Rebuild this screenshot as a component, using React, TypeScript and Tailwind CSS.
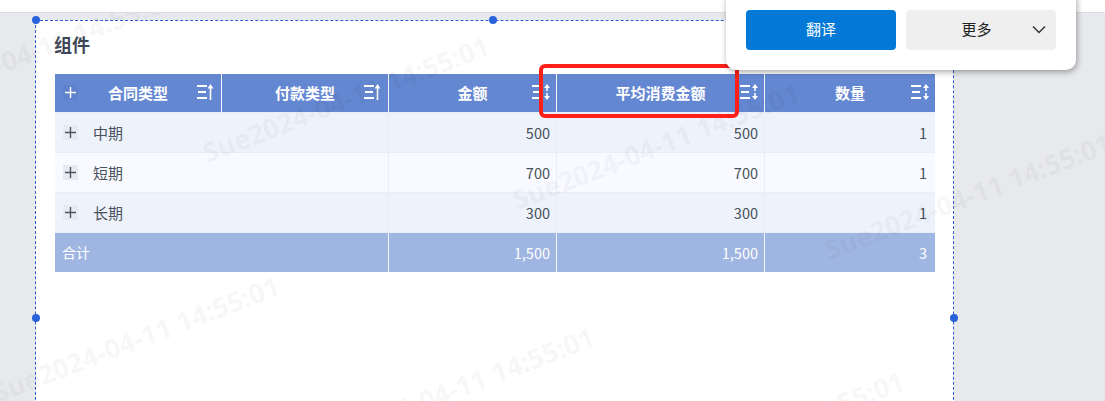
import React from "react";

const cjk = "font-['Microsoft_YaHei','Noto_Sans_CJK_SC','Noto_Sans',sans-serif]";

function SortIcon({ both }: { both?: boolean }) {
  return (
    <svg width={both ? 18 : 17} height="16" viewBox={both ? "0 0 18 16" : "0 0 17 16"} className="block" fill="none" stroke="#fff" strokeWidth="2">
      <path d="M0 2h10M1 8h8M0 14h10" />
      {both ? (
        <>
          <path d="M15 3v4" strokeWidth="1.6" />
          <path d="M12 4 15 0l3 4z" fill="#fff" stroke="none" />
          <path d="M15 9v4" strokeWidth="1.6" />
          <path d="M12 12l3 4 3-4z" fill="#fff" stroke="none" />
        </>
      ) : (
        <>
          <path d="M13.5 3v13" strokeWidth="1.6" />
          <path d="M10.5 4.5 13.5 0l3 4.5z" fill="#fff" stroke="none" />
        </>
      )}
    </svg>
  );
}

function Plus({ header }: { header?: boolean }) {
  return (
    <span className={`flex h-[15px] w-[15px] shrink-0 items-center justify-center ${header ? "bg-[#5f82cd]" : "bg-[#e6eaf1]"}`}>
      <svg width="11" height="11" viewBox="0 0 11 11" stroke={header ? "#fff" : "#4f5360"} strokeWidth="1.4">
        <path d="M0 5.5h11M5.5 0v11" />
      </svg>
    </span>
  );
}

const rows = [
  { name: "中期", amount: "500", bg: "bg-[#eef3fb]" },
  { name: "短期", amount: "700", bg: "bg-[#f8faff]" },
  { name: "长期", amount: "300", bg: "bg-[#eef3fb]" },
];

const gridCols = "grid grid-cols-[167px_167px_168px_208px_170px]";

function HeadCell({ label, both, plus, last }: { label: string; both?: boolean; plus?: boolean; last?: boolean }) {
  return (
    <div className={`relative flex h-[38px] items-center justify-center ${last ? "" : "border-r border-[#f3f5fb]"}`}>
      {plus && (
        <span className="absolute left-2 top-[11px]">
          <Plus header />
        </span>
      )}
      <span className="text-[15px] font-bold text-white">{label}</span>
      <span className={`absolute top-[10px] ${both ? "right-[6px]" : "right-[7px]"}`}>
        <SortIcon both={both} />
      </span>
    </div>
  );
}

function Num({ v, line = "border-[#e9edf6]", last, color = "text-[#474e5c]" }: { v: string; line?: string; last?: boolean; color?: string }) {
  return (
    <div className={`flex h-full items-center justify-end pt-px text-[14.5px] ${color} ${last ? "pr-[8px]" : `border-r pr-[6px] ${line}`}`}>{v}</div>
  );
}

const Handle = ({ cls }: { cls: string }) => (
  <span className={`absolute h-[8px] w-[8px] rounded-full bg-[#2a62dc] ${cls}`} />
);

const marks = [
  "left-[-115px] top-[78px]",
  "left-[198px] top-[126px]",
  "left-[508px] top-[173px]",
  "left-[820px] top-[223px]",
  "left-[-12px] top-[366px]",
  "left-[303px] top-[417px]",
  "left-[613px] top-[461px]",
];

export default function App() {
  return (
    <div className={`relative h-[401px] w-[1105px] overflow-hidden bg-[#e8e9ed] ${cjk}`}>
      <div className="h-[13px] border-b border-[#dcdde2] bg-white" />
      <div className="relative ml-[35px] mt-[7px] h-[400px] w-[919px] border border-dashed border-[#2a5bd0] bg-white pl-[18px] pt-[11px]">
        <h1 className="text-[18px] font-bold leading-[24px] text-[#3f4858]">组件</h1>
        <div className="ml-px mt-[18px] w-[880px]">
          <div className={`${gridCols} bg-[#6487d2]`}>
            <HeadCell label="合同类型" plus />
            <HeadCell label="付款类型" />
            <HeadCell label="金额" both />
            <HeadCell label="平均消费金额" both />
            <HeadCell label="数量" both last />
          </div>
          {rows.map((r) => (
            <div key={r.name} className={`${gridCols} h-[40px] items-stretch border-t border-[#e9edf6] ${r.bg}`}>
              <div className="flex items-center gap-[15px] pl-2 text-[15px] text-[#4a5260]">
                <Plus />
                <span className="pt-px">{r.name}</span>
              </div>
              <div className="border-r border-[#e9edf6]" />
              <Num v={r.amount} />
              <Num v={r.amount} />
              <Num v="1" last />
            </div>
          ))}
          <div className={`${gridCols} h-[40px] border-t border-[#e9edf6] bg-[#a0b6e2]`}>
            <div className="flex items-center pl-[7px] text-[14px] text-white">合计</div>
            <div className="border-r border-[#f3f5fb]" />
            <Num v="1,500" line="border-[#f3f5fb]" color="text-white" />
            <Num v="1,500" line="border-[#f3f5fb]" color="text-white" />
            <Num v="3" last color="text-white" />
          </div>
        </div>
        <Handle cls="left-[-4px] top-[-5px]" />
        <Handle cls="left-[453px] top-[-5px]" />
        <Handle cls="left-[914px] top-[-5px]" />
        <Handle cls="left-[-4px] top-[293px]" />
        <Handle cls="left-[914px] top-[293px]" />
      </div>

      <div className="pointer-events-none absolute inset-x-0 bottom-0 top-[13px] overflow-hidden">
        {marks.map((m) => (
          <span
            key={m}
            className={`absolute ${m} origin-top-left rotate-[-21deg] whitespace-nowrap font-['Open_Sans',sans-serif] text-[27px] font-bold leading-[32px] text-black/[0.055]`}
          >
            Sue2024-04-11 14:55:01
          </span>
        ))}
      </div>

      <div className="absolute left-[539px] top-[64px] h-[54px] w-[200px] rounded-[6px] border-[4px] border-[#fb2119]" />

      <div className="absolute left-[726px] top-[-10px] flex h-[80px] w-[350px] items-end gap-[10px] rounded-[10px] bg-white px-[20px] pb-[20px] shadow-[1px_2px_6px_rgba(0,0,0,0.35)]">
        <button className="flex h-[40px] w-[150px] items-center justify-center rounded-[4px] bg-[#0279d7] pb-[2px] text-[15px] text-white">翻译</button>
        <button className="relative flex h-[40px] w-[150px] items-center justify-center rounded-[4px] bg-[#efefef] pb-[2px] pr-[9px] text-[15px] text-[#222]">
          更多
          <svg className="absolute right-[10px] top-[14px]" width="14" height="12" viewBox="0 0 14 12" fill="none" stroke="#333" strokeWidth="1.5">
            <path d="M1 2.5l6 6 6-6" />
          </svg>
        </button>
      </div>
    </div>
  );
}
